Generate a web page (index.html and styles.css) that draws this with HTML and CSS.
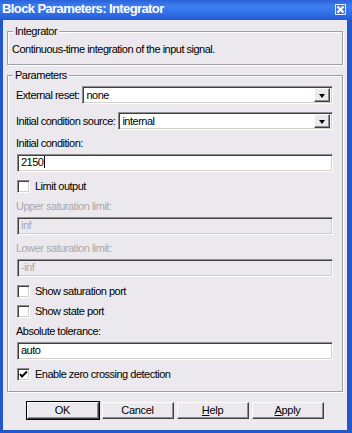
FILE: index.html
```html
<!DOCTYPE html>
<html>
<head>
	<title>Block Parameters: Integrator</title>
	<meta charset="utf-8">
	<link rel="stylesheet" href="styles.css">
</head>
<body>
	<div class="window">
		<div class="titlebar">
			<span class="title">Block Parameters: Integrator</span>
			<span class="close">
				<svg width="9" height="9" viewBox="0 0 9 9"><path d="M1.5 1.5 L7.5 7.5 M7.5 1.5 L1.5 7.5" stroke="#fff" stroke-width="2"/></svg>
			</span>
		</div>
		<div class="client">
			<div class="group group-desc">
				<div class="legend">Integrator</div>
				<div class="desc">Continuous-time integration of the input signal.</div>
			</div>
			<div class="group group-params">
				<div class="legend">Parameters</div>
				<div class="row">
					<span class="row-label">External reset:</span>
					<div class="select"><span class="select-value">none</span><span class="arrow"></span></div>
				</div>
				<div class="row row-next">
					<span class="row-label">Initial condition source:</span>
					<div class="select"><span class="select-value">internal</span><span class="arrow"></span></div>
				</div>
				<div class="lbl">Initial condition:</div>
				<div class="field">2150<span class="caret"></span></div>
				<div class="check"><span class="box"></span>Limit output</div>
				<div class="lbl disabled">Upper saturation limit:</div>
				<div class="field disabled">inf</div>
				<div class="lbl disabled">Lower saturation limit:</div>
				<div class="field disabled">-inf</div>
				<div class="check"><span class="box"></span>Show saturation port</div>
				<div class="check"><span class="box"></span>Show state port</div>
				<div class="lbl">Absolute tolerance:</div>
				<div class="field">auto</div>
				<div class="check"><span class="box"><svg width="9" height="9" viewBox="0 0 9 9"><path d="M1 4 L3 6.5 L8 1.5" stroke="#000" stroke-width="2" fill="none"/></svg></span>Enable zero crossing detection</div>
			</div>
			<div class="buttons">
				<button class="btn btn-default" type="button">OK</button>
				<button class="btn" type="button">Cancel</button>
				<button class="btn" type="button"><u>H</u>elp</button>
				<button class="btn" type="button"><u>A</u>pply</button>
			</div>
		</div>
	</div>
</body>
</html>
```

FILE: styles.css
```css
body {
	margin: 0;
	background: #ebe9ed;
	font-family: "Liberation Sans", Arial, sans-serif;
	font-size: 11px;
	letter-spacing: -0.5px;
	color: #000;
}
.window {
	width: 352px;
	height: 433px;
	display: flex;
	flex-direction: column;
}
.titlebar {
	height: 20px;
	display: flex;
	align-items: flex-start;
	justify-content: space-between;
	background: linear-gradient(#2a62da, #3e7ef0 30%, #3270e8 65%, #2258d2);
}
.title {
	color: #fff;
	font-weight: bold;
	font-size: 13px;
	letter-spacing: -0.6px;
	line-height: 17px;
	padding-left: 2px;
}
.close {
	width: 9px;
	height: 9px;
	margin: 4px 6px 0 0;
	border: 1px solid #e0e8fa;
	background: #3f78e6;
	display: flex;
}
.client {
	flex: 1;
	border-left: 3px solid #2456cc;
	border-right: 5px solid #2456cc;
	border-bottom: 3px solid #2456cc;
	background: #ebe9ed;
}
.group {
	margin: 0 4px;
	padding: 0 9px 0 9px;
	border: 1px solid #a0a0a4;
	box-shadow: inset 1px 1px 0 #fff, 1px 1px 0 #fff;
}
.group-desc {
	margin-top: 11px;
	padding-bottom: 8px;
}
.group-params {
	margin-top: 10px;
	padding-bottom: 10px;
}
.legend {
	display: table;
	margin: -7px 0 0 -4px;
	padding: 0 2px;
	line-height: 13px;
	background: #ebe9ed;
}
.desc {
	margin: 4px 0 0 -5px;
	line-height: 14px;
}
.row {
	display: flex;
	align-items: center;
	height: 18px;
	margin-top: 4px;
}
.row-next {
	margin-top: 8px;
}
.row-label {
	margin-left: -1px;
	padding-right: 3px;
}
.select, .field {
	flex: 1;
	height: 18px;
	box-sizing: border-box;
	background: #fff;
	border: 1px solid;
	border-color: #8e8e8e #fff #fff #8e8e8e;
	box-shadow: inset 1px 1px 0 #404040, inset -1px -1px 0 #d4d0c8;
	line-height: 15px;
	padding-left: 3px;
}
.select {
	display: flex;
	align-items: center;
	padding-right: 2px;
}
.select-value {
	flex: 1;
}
.arrow {
	width: 16px;
	height: 14px;
	box-sizing: border-box;
	background: #ebe9ed;
	border: 1px solid;
	border-color: #fff #404040 #404040 #fff;
	box-shadow: inset -1px -1px 0 #8e8e8e;
	display: flex;
	align-items: center;
	justify-content: center;
}
.arrow::after {
	content: "";
	border-left: 3px solid transparent;
	border-right: 3px solid transparent;
	border-top: 4px solid #000;
	margin: 1px 1px 0 0;
}
.lbl {
	margin: 6px 0 0 -1px;
	line-height: 14px;
}
.field {
	margin-top: 4px;
}
.caret {
	display: inline-block;
	width: 1px;
	height: 12px;
	background: #000;
	vertical-align: -2px;
	margin-left: 1px;
}
.disabled {
	color: #a9a8ad;
}
.field.disabled {
	background: #ebe9ed;
}
.check {
	display: flex;
	align-items: center;
	height: 14px;
	margin-top: 7px;
}
.check + .check {
	margin-top: 6px;
}
.box {
	width: 13px;
	height: 13px;
	box-sizing: border-box;
	margin-right: 5px;
	background: #fff;
	border: 1px solid;
	border-color: #8e8e8e #fff #fff #8e8e8e;
	box-shadow: inset 1px 1px 0 #404040, inset -1px -1px 0 #d4d0c8;
	display: flex;
	align-items: center;
	justify-content: center;
}
.buttons {
	display: flex;
	justify-content: center;
	gap: 3px;
	margin-top: 10px;
}
.btn {
	width: 72px;
	height: 17px;
	padding: 0;
	font-family: inherit;
	font-size: 11px;
	letter-spacing: -0.3px;
	color: #000;
	background: #ebe9ed;
	border: 1px solid;
	border-color: #fff #404040 #404040 #fff;
	box-shadow: inset -1px -1px 0 #8e8e8e;
	line-height: 13px;
}
.btn-default {
	outline: 1px solid #000;
	outline-offset: 0;
}
```
